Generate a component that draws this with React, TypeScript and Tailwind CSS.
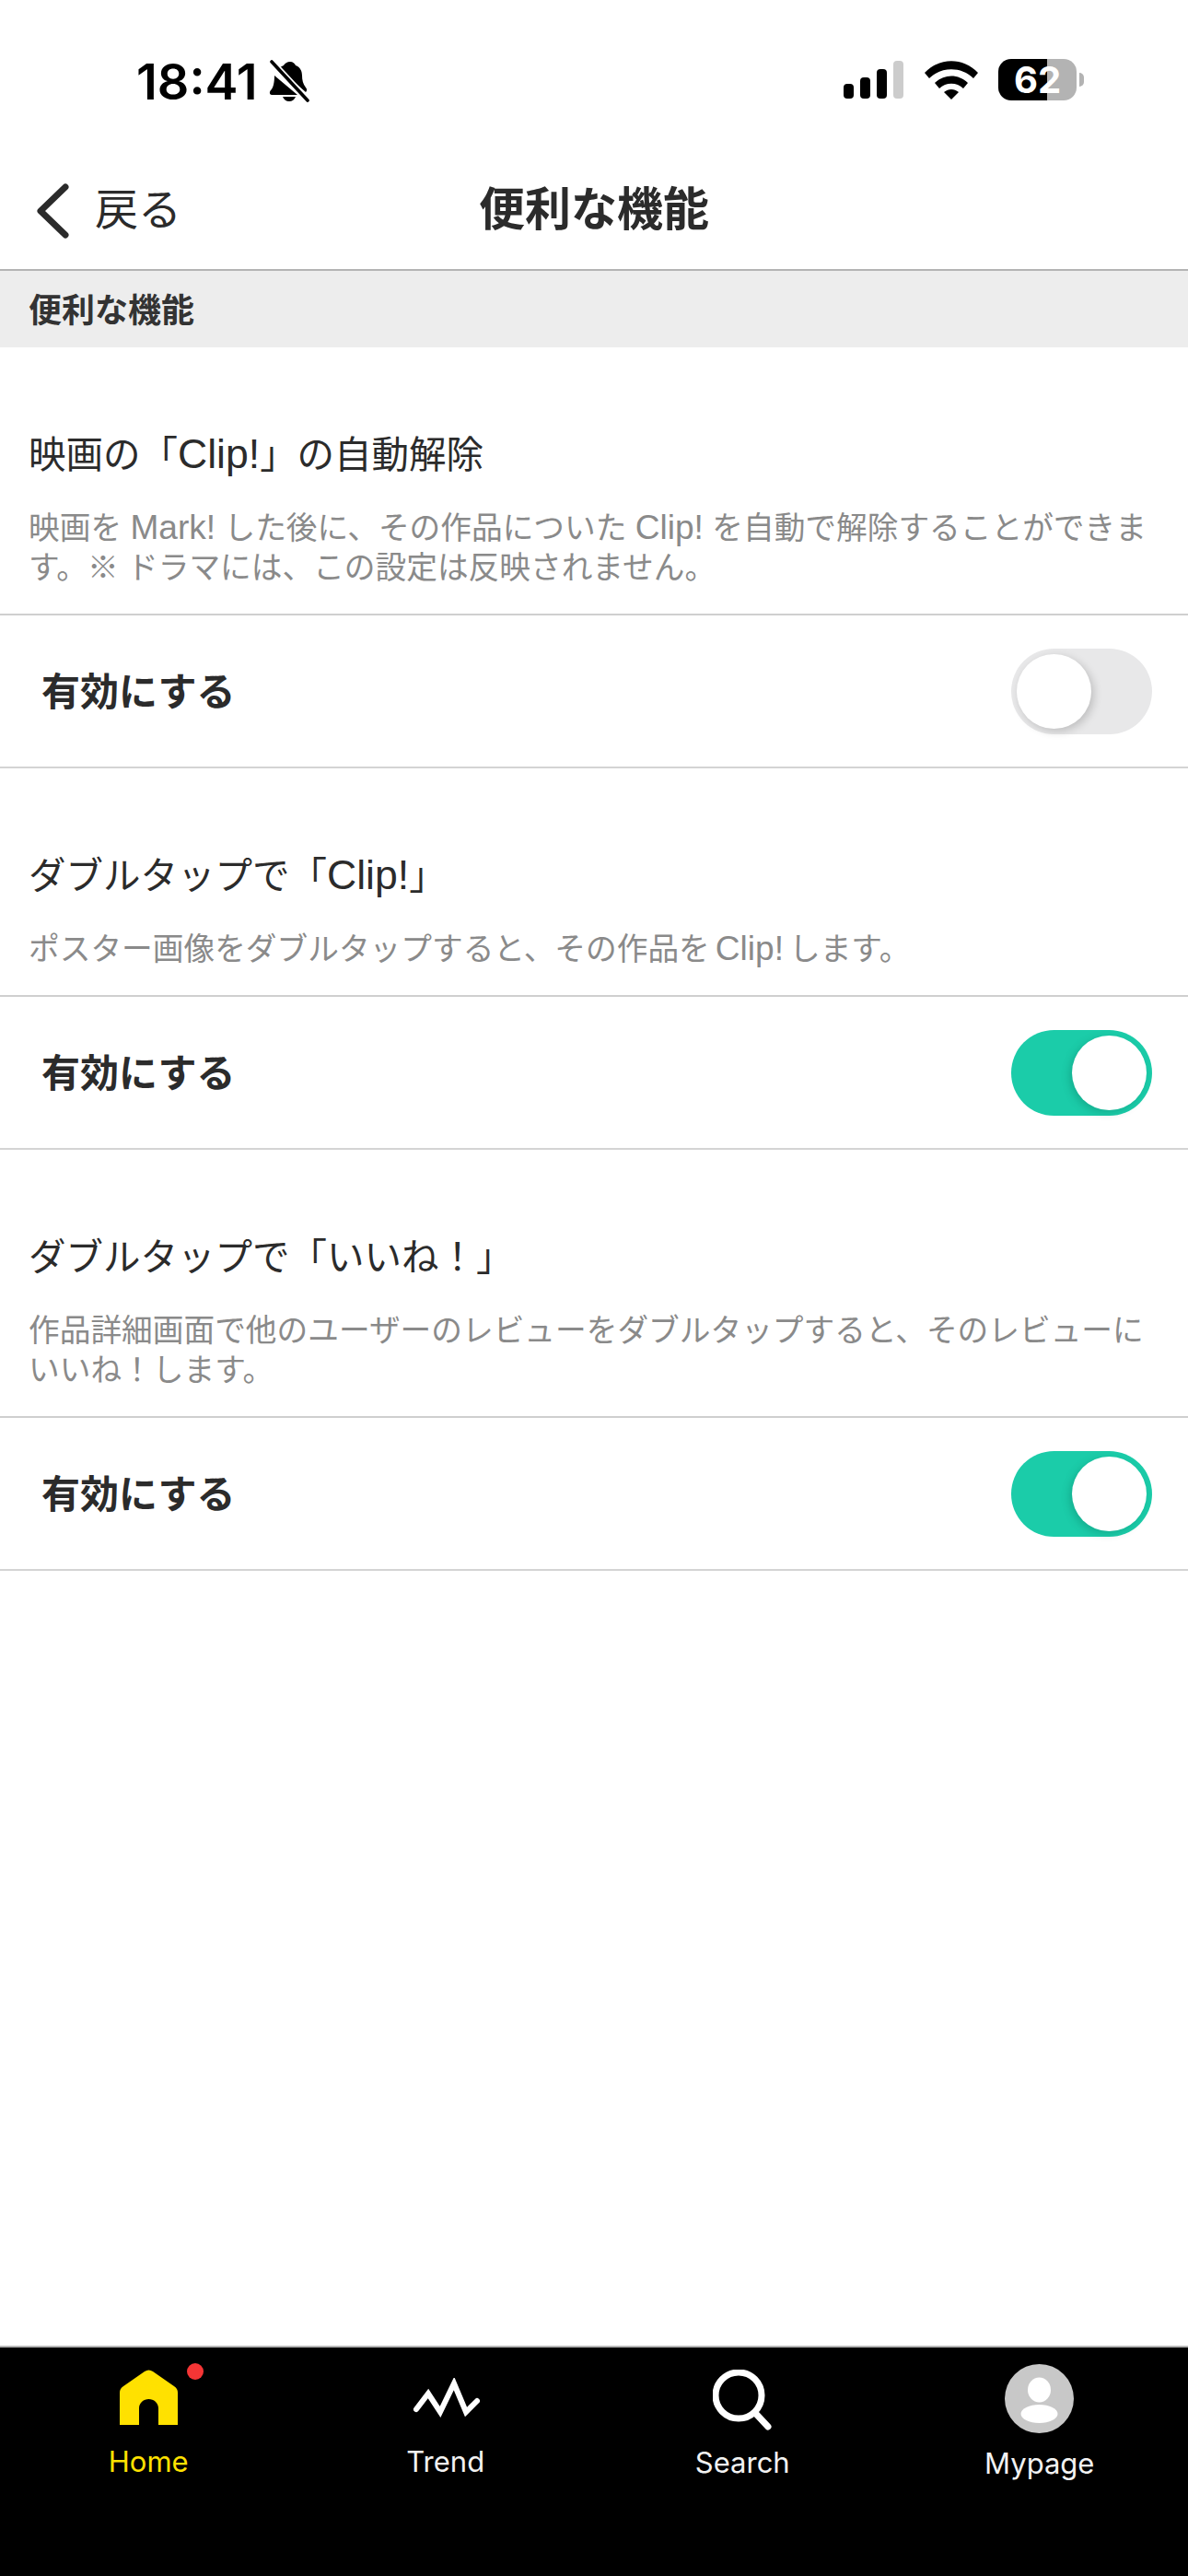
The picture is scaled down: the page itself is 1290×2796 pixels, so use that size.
import type { ReactNode } from "react"

const jp = "font-['Liberation_Sans','Noto_Sans_CJK_JP','Noto_Sans_CJK_SC',sans-serif]"

function Toggle({ on }: { on: boolean }) {
  return (
    <div
      className={`flex h-[93px] w-[153px] items-center rounded-full px-[6px] ${
        on ? "justify-end bg-[#1bcca9]" : "justify-start bg-[#e8e8e9]"
      }`}
    >
      <div
        className={`h-[81px] w-[81px] rounded-full bg-white ${
          on ? "shadow-[-3px_3px_8px_rgba(0,90,70,0.25)]" : "shadow-[3px_3px_10px_rgba(0,0,0,0.18)]"
        }`}
      />
    </div>
  )
}

// latin runs are set larger than the kana in the original
function Latin({ children }: { children: ReactNode }) {
  return <span className="text-[1.1em] leading-none">{children}</span>
}

function Setting({ title, desc, on }: { title: ReactNode; desc: ReactNode[]; on: boolean }) {
  return (
    <section>
      <div className="border-b-2 border-[#cfcfcf] px-[31px] pt-[92px] pb-[28px]">
        <h2 className="text-[40.5px] leading-[50px] text-[#2b2b2b]">{title}</h2>
        <div className="mt-[33px] text-[33.7px] leading-[43px] text-[#8a8a8a]">
          {desc.map((line, i) => (
            <p key={i} className="whitespace-nowrap">
              {line}
            </p>
          ))}
        </div>
      </div>
      <div className="flex h-[166px] items-center justify-between border-b-2 border-[#d4d4d4] pr-[39px] pl-[45px]">
        <span className="mt-[3px] text-[42px] leading-[56px] font-bold text-[#2b2b2b]">有効にする</span>
        <Toggle on={on} />
      </div>
    </section>
  )
}

function BellOff() {
  return (
    <svg width="44" height="46" viewBox="0 0 44 46">
      <path
        d="M23 2c3 0 5 2 6 4 5 2 7 6 7 11 0 5 1 9 4 13 1 1 2 3 0 5L10 9c2-1 4-2 6-3 1-2 4-4 7-4zM6 17 31 38H3c-2 0-3-3-1-5 3-3 4-9 4-16zM15 40h14c-1 3-4 5-7 5s-6-2-7-5z"
        fill="#000"
      />
      <path d="M3 2 42 44" stroke="#fff" strokeWidth="7" />
      <path d="M3 2 42 44" stroke="#000" strokeWidth="3.6" strokeLinecap="round" />
    </svg>
  )
}

function StatusBar() {
  return (
    <div className="flex h-[170px] items-start justify-between pt-[64px] pr-[113px] pl-[148px] font-['Inter',sans-serif]">
      <div className="flex items-center gap-[12px]">
        <span className="mt-[2px] text-[54px] leading-[46px] font-semibold text-black">18:41</span>
        <BellOff />
      </div>
      <div className="flex items-center">
        <div className="flex items-end gap-[7px]">
          <div className="h-[16px] w-[11px] rounded-[4px] bg-black" />
          <div className="h-[23px] w-[11px] rounded-[4px] bg-black" />
          <div className="h-[32px] w-[11px] rounded-[4px] bg-black" />
          <div className="h-[41px] w-[11px] rounded-[4px] bg-[#cccccc]" />
        </div>
        <svg className="ml-[23px]" width="58" height="42" viewBox="0 0 58 42">
          <path d="M0 13C16-4 42-4 58 13l-5 6C40 6 18 6 5 19z" fill="#000" />
          <path d="M11 24c10-10 26-10 36 0l-5 6c-7-7-19-7-26 0z" fill="#000" />
          <path d="M21 34c5-4 11-4 16 0l-8 8z" fill="#000" />
        </svg>
        <div className="relative ml-[22px] flex h-[45px] w-[85px]">
          <div className="h-full w-[53px] rounded-l-[14px] bg-black" />
          <div className="h-full w-[32px] rounded-r-[14px] bg-[#b3b3b3]" />
          <span className="absolute top-0 left-[17px] text-[40px] leading-[45px] font-bold text-white">62</span>
        </div>
        <div className="ml-[3px] h-[15px] w-[5px] rounded-r-full bg-[#b3b3b3]" />
      </div>
    </div>
  )
}

function Nav() {
  return (
    <header className="grid h-[124px] grid-cols-[1fr_auto_1fr] items-center border-b-2 border-[#b4b4b4] pb-[6px]">
      <div className="flex items-center pl-[38px]">
        <svg className="mt-[2px]" width="38" height="60" viewBox="0 0 38 60" fill="none">
          <path d="M33 4 6 30l27 26" stroke="#2b2b2b" strokeWidth="7" strokeLinecap="round" strokeLinejoin="round" />
        </svg>
        <span className="ml-[27px] text-[47px] leading-[60px] text-[#2b2b2b]">戻る</span>
      </div>
      <h1 className="text-[50px] leading-[60px] font-bold text-[#2b2b2b]">便利な機能</h1>
      <div />
    </header>
  )
}

function TabBar() {
  return (
    <nav className="grid h-[250px] grid-cols-4 border-t-2 border-[#b4b4b4] bg-black font-['Inter',sans-serif] text-[31px] leading-[36px] text-[#f2f2f2]">
      <div className="flex flex-col items-center">
        <div className="relative mt-[24px] h-[60px] w-[63px]">
          <svg width="63" height="60" viewBox="0 0 63 60">
            <path
              d="M0 60V25c0-3 1-5 4-7L27 2c3-2 6-2 9 0l23 16c3 2 4 4 4 7v35H42V42c0-6-5-10-10.500-10S21 36 21 42v18z"
              fill="#ffe100"
            />
          </svg>
          <div className="absolute top-[-7px] left-[73px] h-[18px] w-[18px] rounded-full bg-[#f53535]" />
        </div>
        <span className="mt-[22px] text-[#ffe100]">Home</span>
      </div>
      <div className="flex flex-col items-center">
        <svg className="mt-[33px]" width="74" height="46" viewBox="0 0 74 46" fill="none">
          <path d="M5 34 18 17l13 20L46 6l13 31 12-12" stroke="#fff" strokeWidth="6" strokeLinecap="round" />
        </svg>
        <span className="mt-[27px]">Trend</span>
      </div>
      <div className="flex flex-col items-center">
        <svg className="mt-[24px]" width="64" height="66" viewBox="0 0 64 66" fill="none">
          <circle cx="28" cy="28" r="25" stroke="#fff" strokeWidth="7" />
          <path d="M46 47 60 62" stroke="#fff" strokeWidth="7" strokeLinecap="round" />
        </svg>
        <span className="mt-[17px]">Search</span>
      </div>
      <div className="flex flex-col items-center">
        <svg className="mt-[18px]" width="75" height="75" viewBox="0 0 75 75">
          <circle cx="37.5" cy="37.5" r="37.5" fill="#c8c8c8" />
          <ellipse cx="37.5" cy="28" rx="12.5" ry="13.5" fill="#fff" />
          <ellipse cx="37.5" cy="54" rx="20" ry="10" fill="#fff" />
        </svg>
        <span className="mt-[15px]">Mypage</span>
      </div>
    </nav>
  )
}

export default function App() {
  return (
    <main className={`flex h-[2796px] w-[1290px] flex-col bg-white ${jp}`}>
      <StatusBar />
      <Nav />
      <div className="flex h-[83px] items-center bg-[#ededed] px-[31px] pt-[4px]">
        <span className="text-[36px] leading-[50px] font-bold text-[#333333]">便利な機能</span>
      </div>
      <Setting
        title={
          <>
            映画の「<Latin>Clip!</Latin>」の自動解除
          </>
        }
        desc={[
          <>
            映画を <Latin>Mark!</Latin> した後に、その作品についた <Latin>Clip!</Latin> を自動で解除することができま
          </>,
          "す。※ ドラマには、この設定は反映されません。",
        ]}
        on={false}
      />
      <Setting
        title={
          <>
            ダブルタップで「<Latin>Clip!</Latin>」
          </>
        }
        desc={[
          <>
            ポスター画像をダブルタップすると、その作品を<span className="mx-[6px] text-[1.1em] leading-none">Clip!</span>します。
          </>,
        ]}
        on={true}
      />
      <Setting
        title="ダブルタップで「いいね！」"
        desc={["作品詳細画面で他のユーザーのレビューをダブルタップすると、そのレビューに", "いいね！します。"]}
        on={true}
      />
      <div className="flex-1" />
      <TabBar />
    </main>
  )
}
